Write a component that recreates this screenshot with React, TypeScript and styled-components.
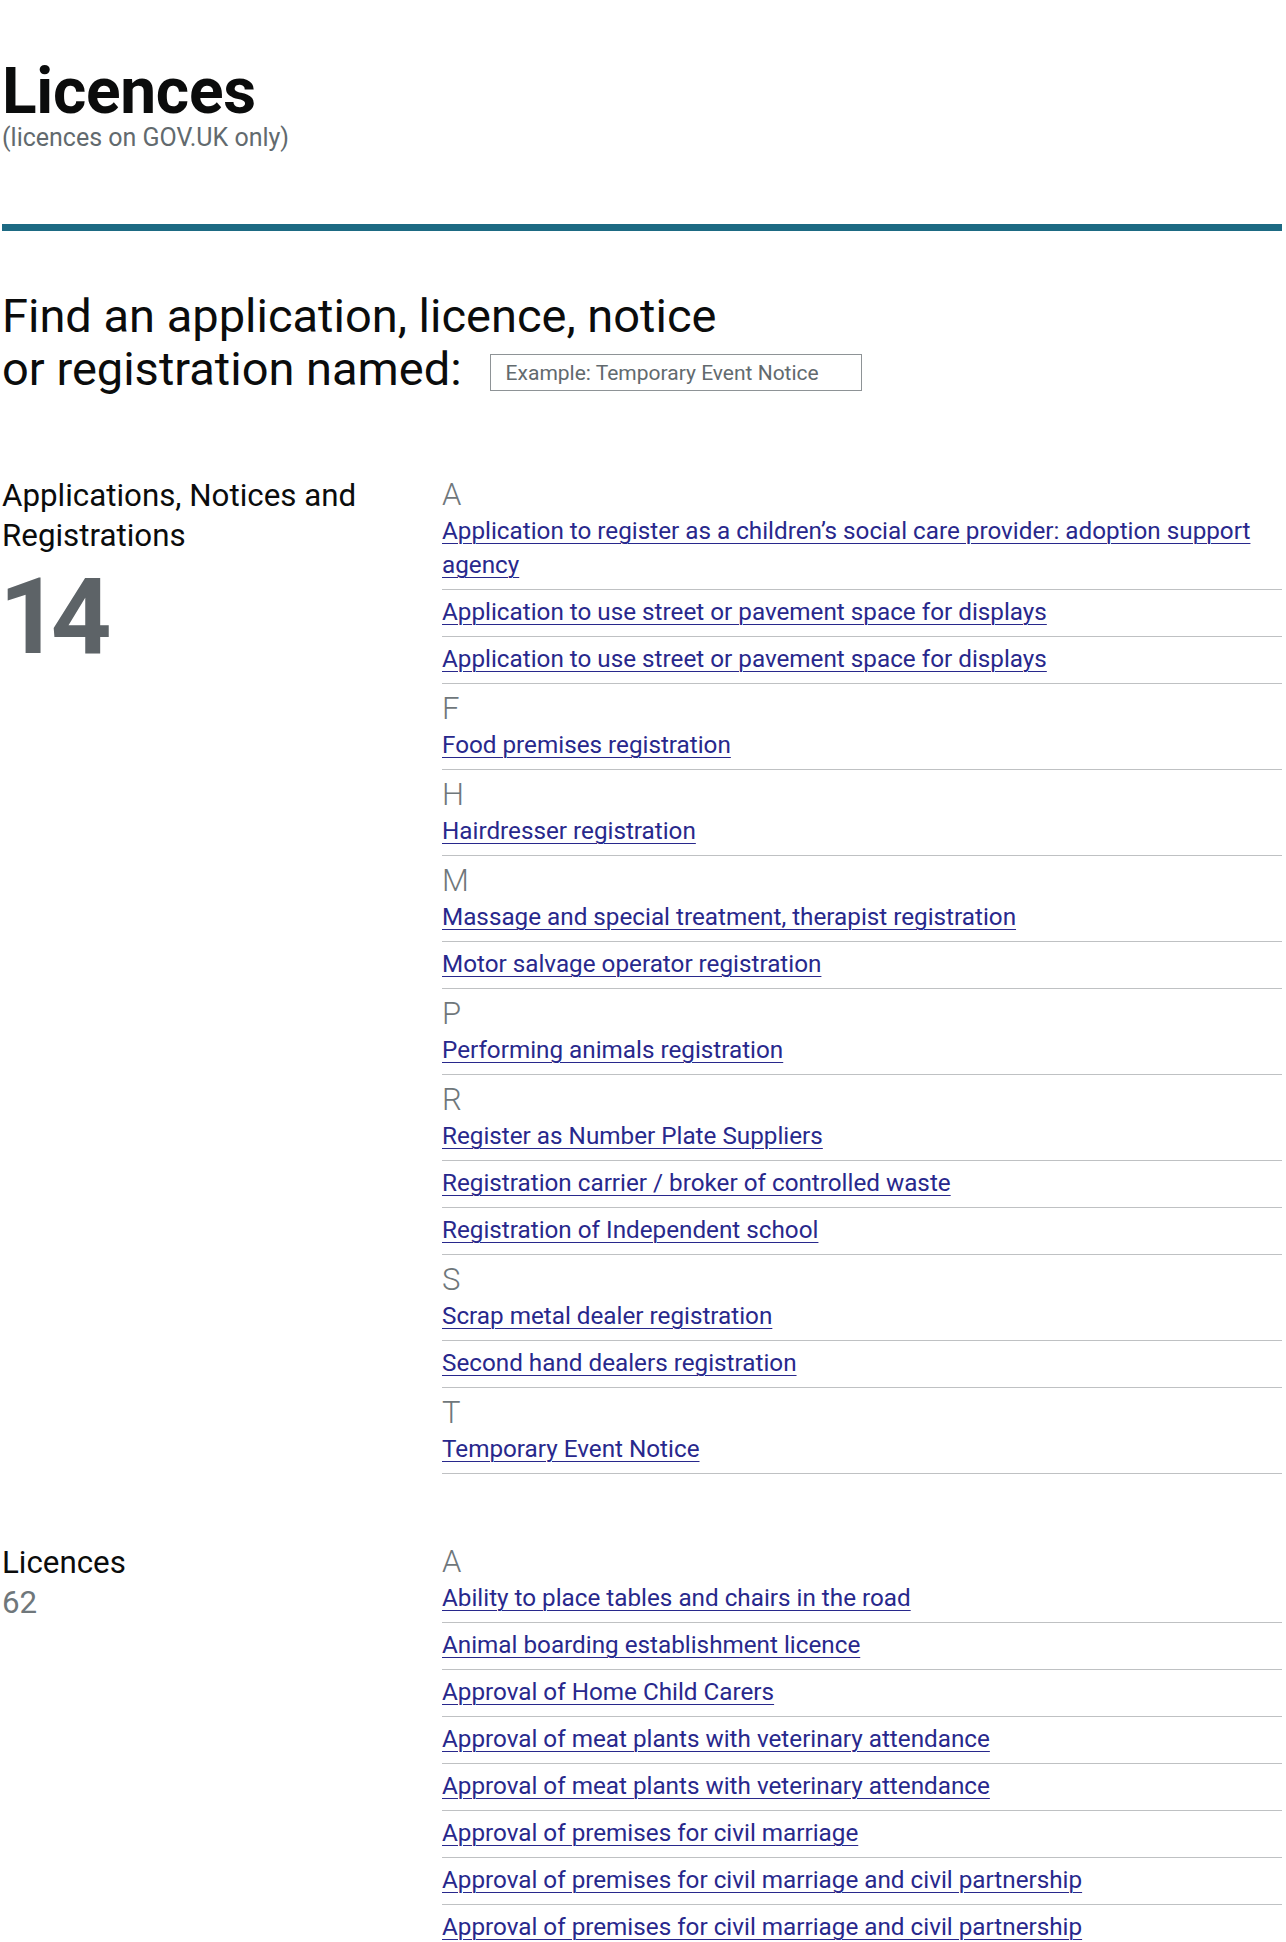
import React from "react";
import styled, { createGlobalStyle } from "styled-components";

interface LetterGroup {
  letter: string;
  items: string[];
}

interface Category {
  title: React.ReactNode;
  count: number;
  big: boolean;
  groups: LetterGroup[];
}

const GlobalStyle = createGlobalStyle`
  html, body {
    margin: 0;
    padding: 0;
    background: #ffffff;
  }
  body {
    font-family: Roboto, "Liberation Sans", Arial, sans-serif;
    color: #0b0c0c;
  }
`;

const Page = styled.div`
  width: 1280px;
  padding: 60px 4px 0 2px;
`;

const Title = styled.h1`
  margin: 0;
  font-size: 64px;
  font-weight: 700;
  line-height: 64px;
  letter-spacing: -0.3px;
`;

const Subtitle = styled.p`
  margin: 0;
  font-size: 25px;
  line-height: 28px;
  color: #626a6e;
`;

const Rule = styled.hr`
  margin: 72px 0 0;
  border: 0;
  height: 7px;
  background: #1d6a83;
`;

const SearchHeading = styled.h2`
  margin: 58px 0 0;
  font-size: 47px;
  font-weight: 400;
  line-height: 53px;
`;

const SearchInput = styled.input`
  vertical-align: middle;
  margin-left: 28px;
  width: 372px;
  height: 37px;
  box-sizing: border-box;
  border: 1px solid #8e9396;
  padding: 0 15px;
  font-family: Roboto, "Liberation Sans", Arial, sans-serif;
  font-size: 21px;
  color: #0b0c0c;
  &::placeholder {
    color: #626a6e;
    opacity: 1;
  }
`;

const Section = styled.section`
  display: grid;
  grid-template-columns: 440px 1fr;
  margin-top: 75px;
  & + & {
    margin-top: 63px;
  }
`;

const Aside = styled.div`
  padding-top: 6px;
`;

const AsideTitle = styled.h3`
  margin: 0;
  font-size: 31.3px;
  font-weight: 400;
  line-height: 40px;
`;

const Count = styled.div<{ $big: boolean }>`
  color: ${({ $big }) => ($big ? "#5d6367" : "#6f777b")};
  font-size: ${({ $big }) => ($big ? "106px" : "31.3px")};
  font-weight: ${({ $big }) => ($big ? 700 : 400)};
  line-height: ${({ $big }) => ($big ? 1 : "40px")};
  letter-spacing: ${({ $big }) => ($big ? "-9px" : "0")};
  margin: ${({ $big }) => ($big ? "8px 0 0 -3px" : "0")};
`;

const Groups = styled.div``;

const Letter = styled.h4`
  margin: 0;
  padding-top: 11px;
  font-size: 31px;
  font-weight: 300;
  line-height: 28px;
  color: #6f777b;
`;

const List = styled.ul`
  list-style: none;
  margin: 0;
  padding: 0;
`;

const Item = styled.li`
  padding: 5px 0 7px;
  border-bottom: 1px solid #bfc1c3;
  font-size: 24.25px;
  line-height: 34px;
`;

const ItemLink = styled.a`
  color: #28288c;
  text-decoration: underline;
  text-decoration-thickness: 1px;
  text-underline-offset: 4px;
`;

const categories: Category[] = [
  {
    title: (
      <>
        Applications, Notices and
        <br />
        Registrations
      </>
    ),
    count: 14,
    big: true,
    groups: [
      {
        letter: "A",
        items: [
          "Application to register as a children’s social care provider: adoption support agency",
          "Application to use street or pavement space for displays",
          "Application to use street or pavement space for displays",
        ],
      },
      { letter: "F", items: ["Food premises registration"] },
      { letter: "H", items: ["Hairdresser registration"] },
      {
        letter: "M",
        items: [
          "Massage and special treatment, therapist registration",
          "Motor salvage operator registration",
        ],
      },
      { letter: "P", items: ["Performing animals registration"] },
      {
        letter: "R",
        items: [
          "Register as Number Plate Suppliers",
          "Registration carrier / broker of controlled waste",
          "Registration of Independent school",
        ],
      },
      {
        letter: "S",
        items: ["Scrap metal dealer registration", "Second hand dealers registration"],
      },
      { letter: "T", items: ["Temporary Event Notice"] },
    ],
  },
  {
    title: "Licences",
    count: 62,
    big: false,
    groups: [
      {
        letter: "A",
        items: [
          "Ability to place tables and chairs in the road",
          "Animal boarding establishment licence",
          "Approval of Home Child Carers",
          "Approval of meat plants with veterinary attendance",
          "Approval of meat plants with veterinary attendance",
          "Approval of premises for civil marriage",
          "Approval of premises for civil marriage and civil partnership",
          "Approval of premises for civil marriage and civil partnership",
        ],
      },
    ],
  },
];

const App: React.FC = () => {
  return (
    <>
      <GlobalStyle />
      <Page>
        <Title>Licences</Title>
        <Subtitle>(licences on GOV.UK only)</Subtitle>
        <Rule />
        <SearchHeading>
          Find an application, licence, notice
          <br />
          or registration named:
          <SearchInput type="text" placeholder="Example: Temporary Event Notice" />
        </SearchHeading>
        {categories.map((cat, i) => (
          <Section key={i}>
            <Aside>
              <AsideTitle>{cat.title}</AsideTitle>
              <Count $big={cat.big}>{cat.count}</Count>
            </Aside>
            <Groups>
              {cat.groups.map((group, j) => (
                <div key={j}>
                  <Letter>{group.letter}</Letter>
                  <List>
                    {group.items.map((item, k) => (
                      <Item key={k}>
                        <ItemLink href="#">{item}</ItemLink>
                      </Item>
                    ))}
                  </List>
                </div>
              ))}
            </Groups>
          </Section>
        ))}
      </Page>
    </>
  );
};

export default App;
